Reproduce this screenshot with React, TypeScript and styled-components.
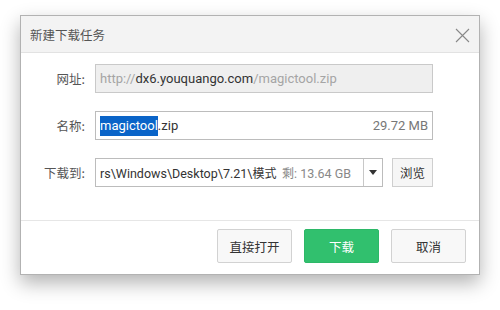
import styled, { createGlobalStyle } from 'styled-components';

const GlobalStyle = createGlobalStyle`
  html, body {
    margin: 0;
    padding: 0;
    background: #ffffff;
  }
  body {
    font-family: Roboto, "Noto Sans CJK SC", sans-serif;
  }
`;

const Page = styled.div`
  width: 500px;
  height: 310px;
  padding: 15px 0 0 20px;
  box-sizing: border-box;
`;

const Dialog = styled.div`
  width: 460px;
  height: 260px;
  box-sizing: border-box;
  border: 1px solid #b2b2b2;
  background: #ffffff;
  box-shadow: 0 8px 18px rgba(0, 0, 0, 0.3);
  display: flex;
  flex-direction: column;
`;

const TitleBar = styled.div`
  height: 37px;
  flex-shrink: 0;
  box-sizing: border-box;
  background: #f3f3f3;
  border-bottom: 1px solid #e2e2e2;
  display: flex;
  align-items: center;
  justify-content: space-between;
  padding: 0 9px 0 9px;
`;

const Title = styled.span`
  font-family: "Noto Sans CJK SC", sans-serif;
  font-size: 12.5px;
  color: #555;
`;

const CloseButton = styled.button`
  border: none;
  background: none;
  padding: 0;
  width: 16px;
  height: 16px;
  display: flex;
  align-items: center;
  justify-content: center;
  margin-top: 3px;
`;

const Form = styled.div`
  flex: 1;
  display: grid;
  grid-template-columns: 64px 338px;
  grid-auto-rows: 29px;
  column-gap: 10px;
  row-gap: 18px;
  align-content: start;
  padding-top: 11px;
`;

const Label = styled.div`
  font-family: "Noto Sans CJK SC", sans-serif;
  font-size: 12.5px;
  color: #555;
  display: flex;
  align-items: center;
  justify-content: flex-end;
`;

const Field = styled.div<{ $disabled?: boolean }>`
  box-sizing: border-box;
  height: 29px;
  border: 1px solid ${(p) => (p.$disabled ? '#c9c9c9' : '#bcbcbc')};
  background: ${(p) => (p.$disabled ? '#efefef' : '#ffffff')};
  display: flex;
  align-items: center;
  padding: 0 4px 0 4px;
  font-size: 13px;
  color: #333;
  white-space: nowrap;
  overflow: hidden;
`;

const Dim = styled.span`
  color: #a5a5a5;
`;

const Selected = styled.span`
  background: #0a64c8;
  color: #fff;
  line-height: 20px;
`;

const Size = styled.span`
  margin-left: auto;
  color: #777;
`;

const PathRow = styled.div`
  display: flex;
  gap: 9px;
`;

const PathBox = styled(Field)`
  width: 288px;
  padding-right: 0;
  font-size: 12.5px;
`;

const PathText = styled.span`
  flex: 1;
  min-width: 0;
  overflow: hidden;
`;

const Cjk = styled.span`
  font-family: "Noto Sans CJK SC", sans-serif;
  font-size: 12px;
`;

const Free = styled.span`
  color: #888;
  margin: 0 12px 0 3px;
`;

const Arrow = styled.div`
  width: 18px;
  flex-shrink: 0;
  height: 100%;
  border-left: 1px solid #c8c8c8;
  display: flex;
  align-items: center;
  justify-content: center;
`;

const SmallButton = styled.button`
  box-sizing: border-box;
  width: 41px;
  height: 29px;
  border: 1px solid #cfcfcf;
  background: #f6f6f6;
  font-family: "Noto Sans CJK SC", sans-serif;
  font-size: 12.5px;
  color: #333;
  padding: 0;
`;

const Footer = styled.div`
  height: 54px;
  flex-shrink: 0;
  box-sizing: border-box;
  border-top: 1px solid #e6e6e6;
  display: flex;
  justify-content: flex-end;
  gap: 12px;
  padding: 8px 13px 0 0;
`;

const Button = styled.button<{ $primary?: boolean }>`
  box-sizing: border-box;
  width: 75px;
  height: 34px;
  border-radius: 2px;
  border: 1px solid ${(p) => (p.$primary ? '#2db868' : '#d2d2d2')};
  background: ${(p) => (p.$primary ? '#31c06e' : '#f8f8f8')};
  color: ${(p) => (p.$primary ? '#ffffff' : '#333333')};
  font-family: "Noto Sans CJK SC", sans-serif;
  font-size: 12.5px;
  padding: 0;
`;

export default function App() {
  return (
    <>
      <GlobalStyle />
      <Page>
        <Dialog>
          <TitleBar>
            <Title>新建下载任务</Title>
            <CloseButton aria-label="关闭">
              <svg width="15" height="15" viewBox="0 0 15 15">
                <path d="M1 1 L14 14 M14 1 L1 14" stroke="#888" strokeWidth="1.1" />
              </svg>
            </CloseButton>
          </TitleBar>
          <Form>
            <Label>网址:</Label>
            <Field $disabled>
              <Dim>http://</Dim>dx6.youquango.com<Dim>/magictool.zip</Dim>
            </Field>
            <Label>名称:</Label>
            <Field>
              <Selected>magictool</Selected>.zip
              <Size>29.72 MB</Size>
            </Field>
            <Label>下载到:</Label>
            <PathRow>
              <PathBox>
                <PathText>
                  rs\Windows\Desktop\7.21\<Cjk>模式</Cjk>
                </PathText>
                <Free>
                  <Cjk>剩</Cjk>: 13.64 GB
                </Free>
                <Arrow>
                  <svg width="8" height="5" viewBox="0 0 8 5">
                    <path d="M0 0 H8 L4 5 Z" fill="#333" />
                  </svg>
                </Arrow>
              </PathBox>
              <SmallButton>浏览</SmallButton>
            </PathRow>
          </Form>
          <Footer>
            <Button>直接打开</Button>
            <Button $primary>下载</Button>
            <Button>取消</Button>
          </Footer>
        </Dialog>
      </Page>
    </>
  );
}
